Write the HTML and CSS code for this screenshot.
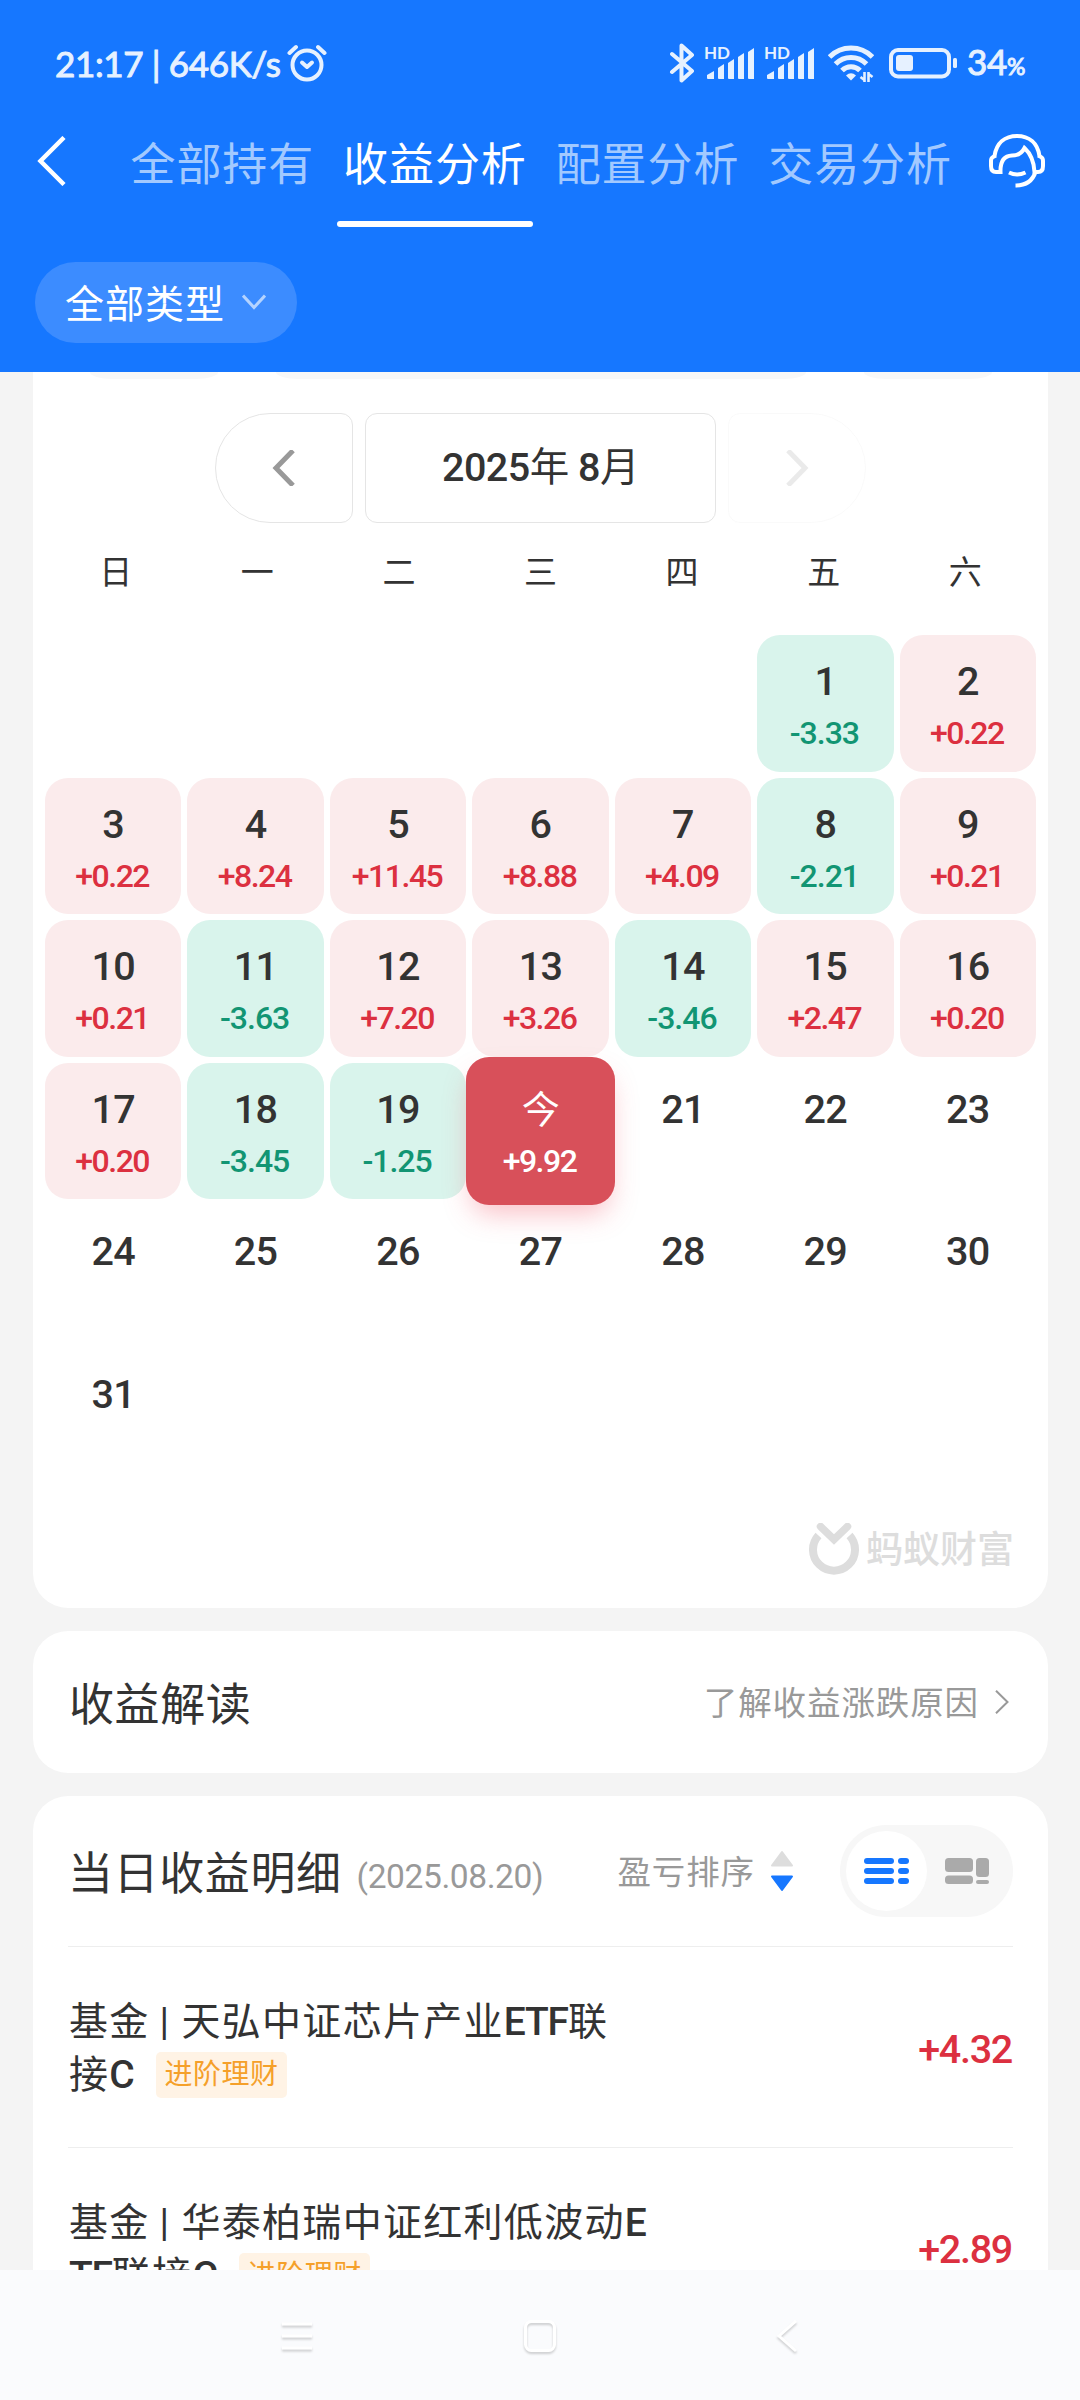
FILE: index.html
```html
<!DOCTYPE html>
<html lang="zh-CN">
<head>
  <meta charset="UTF-8" />
  <meta name="viewport" content="width=device-width, initial-scale=1.0"/>
  <title>收益分析</title>
  <link rel="stylesheet" href="styles.css">
</head>
<body>
  <header class="header">
    <div class="status">
      <span class="status-time">21:17 | 646K/s</span>
      <svg class="alarm" width="40" height="38" viewBox="0 0 40 38" fill="none" stroke="#e6f1ff" stroke-linecap="round">
        <circle cx="20" cy="21" r="14.5" stroke-width="4"/>
        <path d="M2.500 9L9 3M37.500 9L31 3" stroke-width="4"/>
        <path d="M15 18.500l5 4.500 5-4.500" stroke-width="4" stroke-linejoin="round"/>
      </svg>
      <div class="status-icons">
        <svg width="26" height="40" viewBox="0 0 26 40" fill="none" stroke="#e6f1ff" stroke-width="4" stroke-linecap="round" stroke-linejoin="round">
          <path d="M3 11l20 17-10.500 9.500V2.500L23 12 3 29"/>
        </svg>
        <svg class="signal" width="50" height="34" viewBox="0 0 50 34" fill="#e6f1ff">
          <text x="-1" y="13" class="hd">HD</text>
          <path d="M2 29l7-4v8H3q-1 0-1-1zM13 22l6-4v15h-5q-1 0-1-1zM23 17l6-4v20h-5q-1 0-1-1zM33 11l6-4v26h-5q-1 0-1-1zM43 6l6-4v31h-5q-1 0-1-1z"/>
        </svg>
        <svg class="signal" width="50" height="34" viewBox="0 0 50 34" fill="#e6f1ff">
          <text x="-1" y="13" class="hd">HD</text>
          <path d="M2 29l7-4v8H3q-1 0-1-1zM13 22l6-4v15h-5q-1 0-1-1zM23 17l6-4v20h-5q-1 0-1-1zM33 11l6-4v26h-5q-1 0-1-1zM43 6l6-4v31h-5q-1 0-1-1z"/>
        </svg>
        <svg class="wifi" width="46" height="38" viewBox="0 0 46 38" fill="none" stroke="#e6f1ff" stroke-width="5">
          <path d="M1.500 13a30 30 0 0 1 43 0M7.500 20a21.500 21.500 0 0 1 31 0M14 26.500a12.500 12.500 0 0 1 18 0"/>
          <path d="M18 31.500q5-4.500 10 0l-5 5z" fill="#e6f1ff" stroke="none"/>
          <path d="M36.500 28v10M40.500 38V28M37 36.500l-4.500-3.500M40 29.500l4.500 3.500" stroke-width="2.600"/>
        </svg>
        <svg class="battery" width="68" height="32" viewBox="0 0 68 32" fill="none">
          <rect x="2" y="3" width="58" height="26.500" rx="7" stroke="#e6f1ff" stroke-width="4"/>
          <rect x="7" y="8" width="17" height="16" rx="3" fill="#e6f1ff"/>
          <rect x="64" y="11" width="4" height="10" rx="1.500" fill="#e6f1ff"/>
        </svg>
        <span class="status-time">34<small>%</small></span>
      </div>
    </div>

    <div class="nav">
      <svg class="back" width="30" height="50" viewBox="0 0 30 50" fill="none" stroke="#fff" stroke-width="4.500"><path d="M27 1.500L3.500 25 27 48.500"/></svg>
      <nav class="tabs">
        <a class="tab">全部持有</a>
        <a class="tab active">收益分析</a>
        <a class="tab">配置分析</a>
        <a class="tab">交易分析</a>
      </nav>
      <svg class="service" width="58" height="54" viewBox="0 0 58 54" fill="none" stroke="#fff" stroke-width="4">
        <path d="M6.500 22C8.500 9 17 2 29 2S49.500 9 51.500 22"/>
        <path d="M8 21.500L5 23Q3 24 3 27V32Q3 38 8 38H12.500Q12 22 24 21.500C31 21.500 34.500 18 36.500 14C43 20 46 27 46.500 38H50Q55 38 55 32V27Q55 24 53 23L50 21.500"/>
        <path d="M47.500 38Q43 51.500 27.500 51.500M21 38.500Q29 42.500 37.500 38.500"/>
      </svg>
    </div>

    <button class="filter"><span>全部类型</span>
      <svg width="24" height="17" viewBox="0 0 24 17" fill="none" stroke="#b4d3ff" stroke-width="3"><path d="M1 1.500l11 12 11-12"/></svg>
    </button>
  </header>

  <main class="content">
    <section class="card calendar">
      <div class="cut-row"><i></i><i class="wide"></i><i></i></div>
      <div class="month">
        <div class="month-btn prev">
          <svg width="24" height="36" viewBox="0 0 24 36" fill="none" stroke="#999" stroke-width="5"><path d="M21 .500L4 18l17 17.500"/></svg>
        </div>
        <div class="month-name"><span>2025<b>年</b> 8<b>月</b></span></div>
        <div class="month-btn next">
          <svg width="24" height="36" viewBox="0 0 24 36" fill="none" stroke="#999" stroke-width="5"><path d="M3 .500L20 18 3 35.500"/></svg>
        </div>
      </div>
      <div class="week"><span>日</span><span>一</span><span>二</span><span>三</span><span>四</span><span>五</span><span>六</span></div>
      <div class="days" id="days"></div>
      <div class="brand">
        <svg width="50" height="53" viewBox="0 0 50 53" fill="none" stroke="#ddd">
          <path d="M9.500 12.500A21 21 0 1 0 40.500 12.500" stroke-width="8"/>
          <path d="M11.500 3.500L25 16.500 38.500 3.500" stroke-width="7.500" stroke-linecap="round"/>
        </svg>
        <span>蚂蚁财富</span>
      </div>
    </section>

    <section class="card explain">
      <h2>收益解读</h2>
      <a class="more"><span>了解收益涨跌原因</span>
        <svg width="14" height="24" viewBox="0 0 14 24" fill="none" stroke="#999" stroke-width="2"><path d="M1 .700L12.500 12 1 23.300"/></svg>
      </a>
    </section>

    <section class="card detail">
      <div class="detail-head">
        <h2>当日收益明细</h2>
        <span class="date">(2025.08.20)</span>
        <span class="sort">盈亏排序</span>
        <svg class="arrows" width="24" height="42" viewBox="0 0 24 42">
          <path d="M12 2l10 13.500H2z" fill="#ddd" stroke="#ddd" stroke-width="2" stroke-linejoin="round"/>
          <path d="M12 40l10-13.500H2z" fill="#1677ff" stroke="#1677ff" stroke-width="2" stroke-linejoin="round"/>
        </svg>
        <div class="toggle">
          <div class="toggle-on">
            <svg width="45" height="26" viewBox="0 0 45 26" fill="#1677ff">
              <rect width="30" height="6" rx="3"/><rect x="34" width="11" height="6" rx="3"/>
              <rect y="10" width="30" height="6" rx="3"/><rect x="34" y="10" width="11" height="6" rx="3"/>
              <rect y="20" width="30" height="6" rx="3"/><rect x="34" y="20" width="11" height="6" rx="3"/>
            </svg>
          </div>
          <svg width="44" height="26" viewBox="0 0 44 26" fill="#aaa">
            <rect width="28" height="14" rx="3.500"/><rect x="31" width="13" height="19" rx="3.500"/>
            <rect y="17.500" width="28" height="8.500" rx="3.500"/><rect x="31" y="22" width="13" height="4" rx="2"/>
          </svg>
        </div>
      </div>
      <div class="fund">
        <div class="fund-name">基金<span class="bar">|</span>天弘中证芯片产业<b>ETF</b>联<br>接<b>C</b><span class="tag">进阶理财</span></div>
        <span class="amount">+4.32</span>
      </div>
      <div class="fund">
        <div class="fund-name">基金<span class="bar">|</span>华泰柏瑞中证红利低波动<b>E</b><br><b>TF</b>联接<b>C</b><span class="tag">进阶理财</span></div>
        <span class="amount">+2.89</span>
      </div>
    </section>
  </main>

  <footer class="sysbar">
    <svg width="32" height="36" viewBox="0 0 32 36" fill="none" stroke="#fff" stroke-width="3"><path d="M1 4h30M1 16h30M1 28h30"/></svg>
    <svg class="home" width="34" height="36" viewBox="0 0 34 36" fill="none" stroke="#fff" stroke-width="3"><rect x="2.500" y="1.500" width="29" height="29" rx="6"/></svg>
    <svg class="return" width="22" height="36" viewBox="0 0 22 36" fill="none" stroke="#fff" stroke-width="3"><path d="M20 1L3 16l17 15"/></svg>
  </footer>

  <script>
    const profit = ['-3.33', '+0.22', '+0.22', '+8.24', '+11.45', '+8.88', '+4.09', '-2.21', '+0.21', '+0.21',
      '-3.63', '+7.20', '+3.26', '-3.46', '+2.47', '+0.20', '+0.20', '-3.45', '-1.25', '+9.92'];
    const today = 20;
    const days = document.getElementById('days');

    for (let d = 1; d <= 31; d++) {
      const cell = document.createElement('div');
      const value = profit[d - 1];
      cell.className = 'day';
      if (d === 1) cell.classList.add('first');
      if (value) cell.classList.add(value[0] === '+' ? 'up' : 'down');
      if (d === today) cell.classList.add('today');
      cell.innerHTML = `<span class="num">${d === today ? '今' : d}</span>` +
        (value ? `<span class="val">${value}</span>` : '');
      days.appendChild(cell);
    }
  </script>
</body>
</html>
```
FILE: styles.css
```css
* {
  box-sizing: border-box;
}
body {
  margin: 0;
  width: 1080px;
  height: 2400px;
  overflow: hidden;
  display: flex;
  flex-direction: column;
  background: #f4f4f4;
  color: #333;
  font-family: Roboto, "Noto Sans CJK SC", sans-serif;
}
svg {
  display: block;
  flex: none;
}
h2 {
  margin: 0;
  padding-top: 7px;
  font-size: 45px;
  font-weight: 400;
  letter-spacing: 0.600px;
  line-height: 60px;
}

/* header */
.header {
  flex: none;
  height: 372px;
  background: #1677ff;
  color: #fff;
}
.status {
  display: flex;
  align-items: center;
  height: 126px;
  padding: 0 55px;
  color: #e6f1ff;
}
.status-time {
  font-family: Lato, sans-serif;
  font-size: 35px;
  line-height: 40px;
  letter-spacing: -0.350px;
  white-space: nowrap;
  -webkit-text-stroke: 1px #e6f1ff;
}
.status-time small {
  font-size: 23px;
}
.alarm {
  margin-left: 6px;
}
.status-icons {
  display: flex;
  align-items: center;
  margin-left: auto;
}
.signal {
  margin-left: 10px;
  overflow: visible;
}
.hd {
  font: 700 17px Lato, sans-serif;
}
.wifi {
  margin-left: 13px;
}
.battery {
  margin: 0 10px 0 15px;
}
.nav {
  display: flex;
  align-items: center;
  height: 101px;
  padding-left: 37px;
}
.back {
  margin-top: -32px;
}
.tabs {
  display: flex;
  gap: 16.600px;
  align-self: stretch;
  margin-left: 56.500px;
}
.tab {
  width: 196px;
  height: 101px;
  padding-left: 7px;
  font-size: 45px;
  letter-spacing: 0.900px;
  line-height: 79px;
  color: #a2c9ff;
  white-space: nowrap;
  position: relative;
}
.tab.active {
  color: #fff;
}
.tab.active::after {
  content: "";
  position: absolute;
  left: 0.500px;
  bottom: 0;
  width: 196px;
  height: 6px;
  border-radius: 3px;
  background: #fff;
}
.service {
  margin: -31px 0 0 31px;
}
.filter {
  display: flex;
  align-items: center;
  gap: 17px;
  width: 262px;
  height: 81px;
  margin: 35px 0 0 35px;
  padding: 0 0 0 30px;
  border: 0;
  border-radius: 41px;
  background: #3c8cff;
  color: #fff;
  font-family: inherit;
  font-size: 39px;
  letter-spacing: 1px;
}
.filter span {
  padding-bottom: 4px;
}

/* cards */
.content {
  flex: 1;
  min-height: 0;
  overflow: hidden;
  padding: 0 32px 0 33px;
}
.card {
  margin-bottom: 23px;
  border-radius: 35px;
  background: #fff;
}
.calendar {
  height: 1236px;
  border-radius: 0 0 35px 35px;
}
.cut-row {
  display: flex;
  justify-content: center;
  gap: 58px;
  height: 7px;
}
.cut-row i {
  width: 128px;
  background: #f8f8f8;
  border-radius: 0 0 22px 22px / 0 0 7px 7px;
}
.cut-row .wide {
  width: 530px;
}
.month {
  display: flex;
  justify-content: center;
  gap: 12px;
  margin-top: 34px;
}
.month-btn,
.month-name {
  display: flex;
  align-items: center;
  justify-content: center;
  height: 110px;
  border: 1px solid #e5e5e5;
}
.month-btn {
  width: 138px;
}
.prev {
  border-radius: 55px 12px 12px 55px;
}
.next {
  border-radius: 12px 55px 55px 12px;
  opacity: 0.200;
}
.month-name {
  width: 351px;
  border-radius: 12px;
  font-size: 39.500px;
  font-weight: 500;
  letter-spacing: -0.500px;
  line-height: 60px;
}
.month-name b {
  font-weight: 400;
}
.week {
  display: grid;
  grid-template-columns: repeat(7, 1fr);
  height: 112px;
  padding: 25px 12px 0;
  font-size: 33px;
  line-height: 50px;
  text-align: center;
}
.days {
  display: grid;
  grid-template-columns: repeat(7, 1fr);
  grid-auto-rows: 136.500px;
  gap: 6.100px;
  padding: 0 12px;
}
.day {
  display: flex;
  flex-direction: column;
  align-items: center;
  padding-top: 21px;
  border-radius: 23px;
}
.first {
  grid-column: 6;
}
.num {
  font-size: 39.500px;
  font-weight: 500;
  line-height: 52px;
  letter-spacing: -0.700px;
}
.val {
  font-size: 32px;
  font-weight: 500;
  line-height: 40px;
  margin: 5px 2px 0 0;
  letter-spacing: -1.500px;
}
.up {
  background: #fbebec;
}
.up .val {
  color: #dc3040;
}
.down {
  background: #d9f4ec;
}
.down .val {
  color: #129573;
  letter-spacing: -1px;
}
.today {
  margin: -6px;
  padding-top: 27px;
  background: #d8505a;
  box-shadow: 0 14px 28px -6px rgba(240, 70, 90, 0.350);
  z-index: 1;
}
.today .num {
  font-size: 38px;
  font-weight: 400;
}
.today .num,
.today .val {
  color: #fff;
}
.brand {
  display: flex;
  align-items: center;
  justify-content: flex-end;
  gap: 7px;
  margin-top: 38px;
  padding-right: 34px;
  color: #ddd;
  font-size: 37px;
  font-weight: 500;
  line-height: 53px;
}
.brand span {
  padding-top: 2px;
}

/* explain */
.explain {
  display: flex;
  align-items: center;
  justify-content: space-between;
  height: 142px;
  padding: 0 39px 0 36px;
}
.more {
  display: flex;
  align-items: center;
  gap: 16px;
  color: #999;
  font-size: 33.500px;
  letter-spacing: 0.900px;
}
.more span {
  padding-bottom: 4px;
}

/* detail list */
.detail {
  padding: 0 35px;
}
.detail-head {
  display: flex;
  align-items: center;
  height: 151px;
  border-bottom: 1px solid #eee;
}
.date {
  margin: 10px 0 0 15px;
  color: #999;
  font-size: 33.500px;
  letter-spacing: -0.400px;
}
.sort {
  margin-left: auto;
  padding-bottom: 4px;
  color: #999;
  font-size: 33.500px;
  letter-spacing: 0.900px;
}
.arrows {
  margin-left: 15px;
}
.toggle {
  display: flex;
  align-items: center;
  gap: 18px;
  width: 173px;
  height: 92px;
  margin-left: 46px;
  padding: 6px;
  border-radius: 46px;
  background: #f7f7f7;
}
.toggle-on {
  display: flex;
  align-items: center;
  justify-content: center;
  width: 81px;
  height: 80px;
  border-radius: 50%;
  background: #fff;
}
.fund {
  display: flex;
  align-items: center;
  justify-content: space-between;
  height: 200.500px;
  padding: 5px 1px 0;
  border-bottom: 1px solid #eee;
}
.fund-name {
  font-size: 39px;
  line-height: 53px;
  letter-spacing: 1.300px;
  white-space: nowrap;
}
.fund-name b {
  font-weight: 500;
  letter-spacing: -1.200px;
}
.bar {
  margin: 0 11px 0 10px;
}
.tag {
  display: inline-block;
  height: 46px;
  margin-left: 22px;
  padding: 0 8px 0 9px;
  border-radius: 5px;
  background: #fff3e5;
  color: #f5a02a;
  font-size: 28px;
  line-height: 45px;
  letter-spacing: 0.500px;
  vertical-align: 4px;
}
.amount {
  color: #dc3040;
  font-size: 39.500px;
  font-weight: 500;
  letter-spacing: -1.300px;
}

/* system buttons */
.sysbar {
  flex: none;
  display: flex;
  height: 130px;
  padding: 50px 0 0 281px;
  background: #fafbfd;
}
.sysbar svg {
  filter: drop-shadow(0 2px 1px rgba(0, 0, 0, 0.180));
}
.home {
  margin-left: 210px;
}
.return {
  margin-left: 219px;
}
```
